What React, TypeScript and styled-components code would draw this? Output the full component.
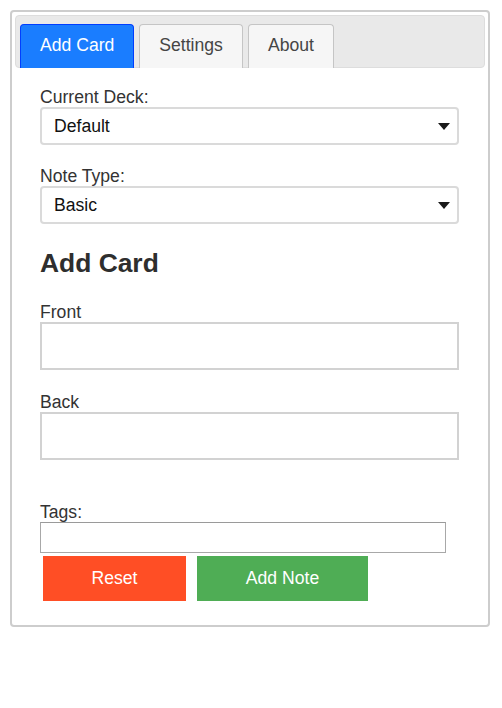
import React from "react";
import styled, { createGlobalStyle } from "styled-components";

const GlobalStyle = createGlobalStyle`
  html, body { margin: 0; padding: 0; background: #ffffff; }
  body { font-family: "Liberation Sans", Arial, sans-serif; }
  * { box-sizing: border-box; }
`;

const Page = styled.div`
  padding: 10px;
`;

const Panel = styled.div`
  width: 480px;
  border: 2px solid #cdcdcd;
  border-radius: 4px;
  padding: 3px;
  font-size: 17.6px;
  color: #333333;
`;

const TabBar = styled.ul`
  display: flex;
  align-items: flex-end;
  gap: 5px;
  height: 53px;
  margin: 0;
  padding: 0 4px;
  list-style: none;
  background: #e9e9e9;
  border: 1px solid #dddddd;
  border-radius: 4px;
`;

const Tab = styled.li<{ $active?: boolean }>`
  height: 44px;
  margin-bottom: -1px;
  padding: 10px 19px 0;
  line-height: 20px;
  font-size: 17.6px;
  white-space: nowrap;
  border: 1px solid ${(p) => (p.$active ? "#003eff" : "#c5c5c5")};
  border-bottom: 0;
  border-radius: 4px 4px 0 0;
  background: ${(p) => (p.$active ? "#1a7dff" : "#f6f6f6")};
  color: ${(p) => (p.$active ? "#ffffff" : "#454545")};
  cursor: pointer;
`;

const Content = styled.div`
  padding: 19px 26px 21px 25px;
`;

const Field = styled.div<{ $gap?: number }>`
  display: flex;
  flex-direction: column;
  margin-top: ${(p) => p.$gap ?? 0}px;
`;

const Label = styled.label`
  display: block;
  line-height: 20px;
  font-size: 17.6px;
  color: #333333;
`;

const SelectWrap = styled.div`
  position: relative;
  width: 419px;
  height: 38px;
`;

const Select = styled.select`
  appearance: none;
  -webkit-appearance: none;
  width: 100%;
  height: 100%;
  padding: 0 30px 0 12px;
  border: 2px solid #dadada;
  border-radius: 4px;
  background: #ffffff;
  font-family: "Liberation Sans", Arial, sans-serif;
  font-size: 17.6px;
  color: #111111;
  outline: none;
`;

const Arrow = styled.svg`
  position: absolute;
  right: 9px;
  top: 50%;
  width: 12px;
  height: 7px;
  margin-top: -3px;
  pointer-events: none;
`;

const Heading = styled.h2`
  margin: 24px 0 24px;
  font-size: 26.4px;
  line-height: 30px;
  font-weight: bold;
  color: #2e2e2e;
`;

const TextArea = styled.textarea`
  display: block;
  width: 419px;
  height: 48px;
  padding: 4px;
  resize: none;
  border: 2px solid #d2d2d2;
  border-radius: 0;
  background: #ffffff;
  font-family: "Liberation Sans", Arial, sans-serif;
  font-size: 16px;
  outline: none;
`;

const TagsInput = styled.input`
  display: block;
  width: 406px;
  height: 31px;
  padding: 2px 4px;
  border: 1px solid #a8a8a8;
  border-top-color: #9a9a9a;
  background: #ffffff;
  font-family: "Liberation Sans", Arial, sans-serif;
  font-size: 16px;
  outline: none;
`;

const ButtonRow = styled.div`
  display: flex;
  gap: 11px;
  margin-top: 3px;
  padding-left: 3px;
`;

const ActionButton = styled.button<{ $color: string; $width: number }>`
  width: ${(p) => p.$width}px;
  height: 45px;
  padding: 0;
  border: none;
  border-radius: 0;
  background: ${(p) => p.$color};
  color: #ffffff;
  font-family: "Liberation Sans", Arial, sans-serif;
  font-size: 17.6px;
  cursor: pointer;
`;

const DropArrow = () => (
  <Arrow viewBox="0 0 12 7">
    <path d="M0 0 L12 0 L6 7 Z" fill="#1a1a1a" />
  </Arrow>
);

export default function App() {
  return (
    <>
      <GlobalStyle />
      <Page>
        <Panel>
          <TabBar>
            <Tab $active>Add Card</Tab>
            <Tab>Settings</Tab>
            <Tab>About</Tab>
          </TabBar>
          <Content>
            <Field>
              <Label>Current Deck:</Label>
              <SelectWrap>
                <Select defaultValue="Default">
                  <option>Default</option>
                </Select>
                <DropArrow />
              </SelectWrap>
            </Field>
            <Field $gap={21}>
              <Label>Note Type:</Label>
              <SelectWrap>
                <Select defaultValue="Basic">
                  <option>Basic</option>
                </Select>
                <DropArrow />
              </SelectWrap>
            </Field>
            <Heading>Add Card</Heading>
            <Field>
              <Label>Front</Label>
              <TextArea />
            </Field>
            <Field $gap={22}>
              <Label>Back</Label>
              <TextArea />
            </Field>
            <Field $gap={42}>
              <Label>Tags:</Label>
              <TagsInput type="text" />
            </Field>
            <ButtonRow>
              <ActionButton $color="#ff4e25" $width={143}>Reset</ActionButton>
              <ActionButton $color="#4fad55" $width={171}>Add Note</ActionButton>
            </ButtonRow>
          </Content>
        </Panel>
      </Page>
    </>
  );
}
